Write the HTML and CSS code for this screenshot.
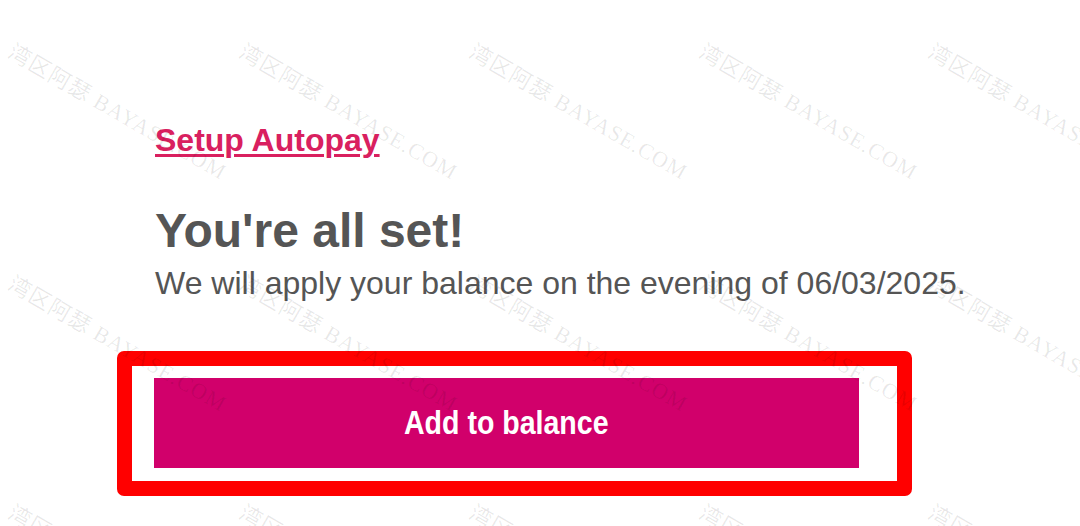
FILE: index.html
```html
<!DOCTYPE html>
<html lang="en">
<head>
<meta charset="utf-8">
<title>You're all set</title>
<link rel="stylesheet" href="styles.css">
</head>
<body>
<main class="page">
  <a class="autopay-link" href="#">Setup Autopay</a>
  <h1 class="title">You're all set!</h1>
  <p class="message">We will apply your balance on the evening of 06/03/2025.</p>
  <button class="add-btn" type="button"><span class="add-btn-label">Add to balance</span></button>
</main>
<div class="highlight"></div>
<div class="watermarks" aria-hidden="true">
  <span class="wm r1 c1">湾区阿瑟 BAYASE.COM</span>
  <span class="wm r1 c2">湾区阿瑟 BAYASE.COM</span>
  <span class="wm r1 c3">湾区阿瑟 BAYASE.COM</span>
  <span class="wm r1 c4">湾区阿瑟 BAYASE.COM</span>
  <span class="wm r1 c5">湾区阿瑟 BAYASE.COM</span>
  <span class="wm r2 c1">湾区阿瑟 BAYASE.COM</span>
  <span class="wm r2 c2">湾区阿瑟 BAYASE.COM</span>
  <span class="wm r2 c3">湾区阿瑟 BAYASE.COM</span>
  <span class="wm r2 c4">湾区阿瑟 BAYASE.COM</span>
  <span class="wm r2 c5">湾区阿瑟 BAYASE.COM</span>
  <span class="wm r3 c1">湾区阿瑟 BAYASE.COM</span>
  <span class="wm r3 c2">湾区阿瑟 BAYASE.COM</span>
  <span class="wm r3 c3">湾区阿瑟 BAYASE.COM</span>
  <span class="wm r3 c4">湾区阿瑟 BAYASE.COM</span>
  <span class="wm r3 c5">湾区阿瑟 BAYASE.COM</span>
</div>
</body>
</html>
```

FILE: styles.css
```css
html, body {
  margin: 0;
  padding: 0;
  background: #ffffff;
}

body {
  width: 1080px;
  height: 526px;
  position: relative;
  overflow: hidden;
  font-family: "Liberation Sans", Arial, sans-serif;
}

.page {
  display: flex;
  flex-direction: column;
  align-items: flex-start;
  padding: 122px 0 0 155px;
}

.autopay-link {
  font-size: 32px;
  line-height: 36px;
  font-weight: 700;
  color: #d9205f;
  text-decoration: underline;
  text-decoration-thickness: 3px;
  text-underline-offset: 3px;
}

.title {
  margin: 46px 0 0;
  font-size: 48px;
  line-height: 54px;
  font-weight: 700;
  color: #555555;
}

.message {
  margin: 6px 0 0;
  font-size: 32px;
  line-height: 38px;
  font-weight: 400;
  color: #555555;
}

.add-btn {
  margin: 76px 0 0 -1px;
  width: 705px;
  height: 90px;
  border: none;
  border-radius: 0;
  background: #d1006b;
  color: #ffffff;
  font-family: "Liberation Sans", Arial, sans-serif;
  font-size: 33px;
  font-weight: 700;
  padding: 0;
  cursor: pointer;
}

.add-btn-label {
  display: inline-block;
  transform: scaleX(0.865);
}

.highlight {
  position: absolute;
  left: 117px;
  top: 351px;
  width: 795px;
  height: 145px;
  box-sizing: border-box;
  border: 15px solid #ff0000;
  border-radius: 7px;
  pointer-events: none;
}

.watermarks {
  position: absolute;
  inset: 0;
  overflow: hidden;
  pointer-events: none;
}

.wm {
  position: absolute;
  white-space: nowrap;
  transform: rotate(30deg);
  transform-origin: 0 0;
  font-family: "Liberation Serif", "Noto Sans CJK SC", serif;
  font-size: 22px;
  line-height: 24px;
  color: rgba(0, 0, 0, 0.09);
  letter-spacing: 1px;
}

.r1 { top: 40px; }
.r2 { top: 272px; }
.r3 { top: 501px; }

.c1 { left: 16px; }
.c2 { left: 247px; }
.c3 { left: 477px; }
.c4 { left: 707px; }
.c5 { left: 936px; }
```
